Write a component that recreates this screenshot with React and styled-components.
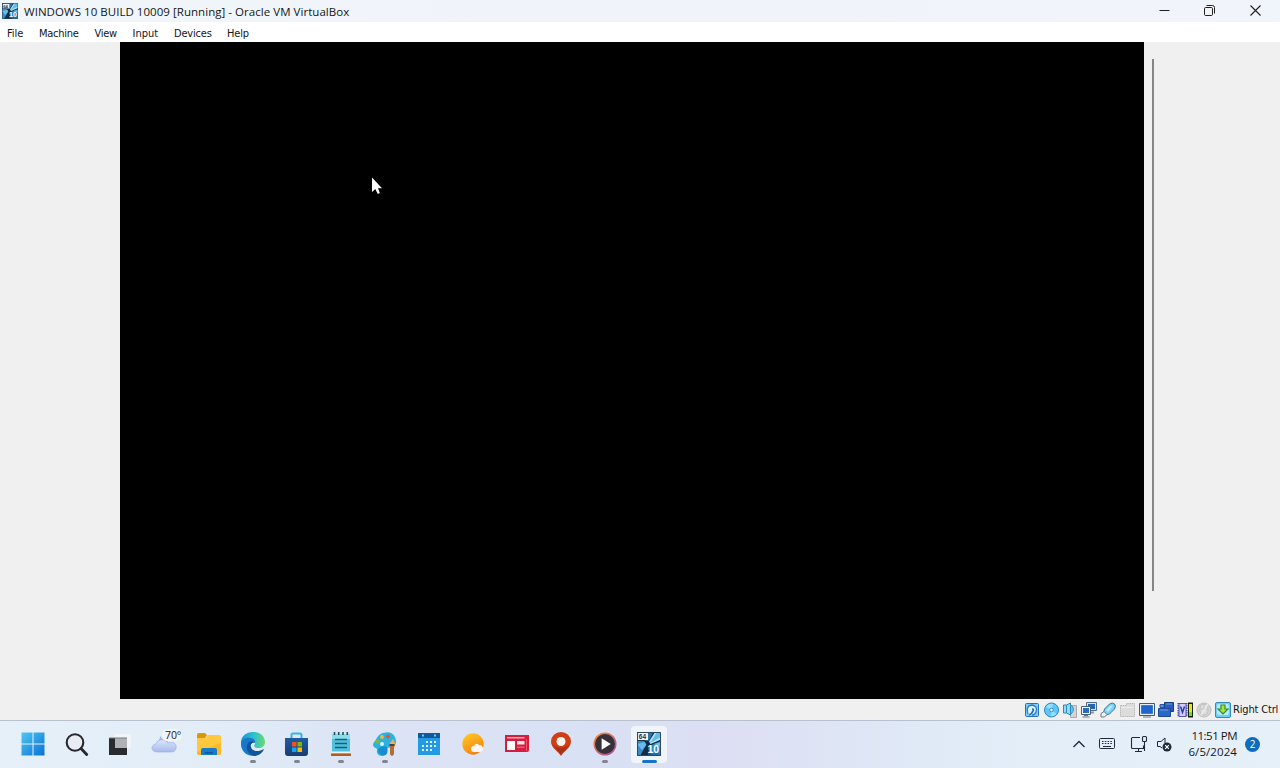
import React from 'react'
import styled, { createGlobalStyle } from 'styled-components'

const GlobalStyle = createGlobalStyle`
  * { box-sizing: border-box; }
  html, body {
    margin: 0;
    padding: 0;
    overflow: hidden;
  }
  svg { display: block; flex: none; }
`

const Screen = styled.div`
  display: flex;
  flex-direction: column;
  width: 1280px;
  height: 768px;
  background: #f0f0f0;
  color: #151515;
  font-family: 'Open Sans', 'Noto Sans', sans-serif;
  cursor: default;
`

const TitleBar = styled.header`
  display: flex;
  align-items: center;
  height: 22px;
  padding-left: 2px;
  background: linear-gradient(90deg, #f0f6fa, #f0f3fa 60%, #f0f5fb);
`

const Title = styled.div`
  flex: 1;
  margin-left: 6px;
  padding-top: 2px;
  font-size: 11.5px;
  line-height: 20px;
  letter-spacing: ${props => props.$spacing}px;
  white-space: nowrap;
`

const WindowButtons = styled.div`
  display: flex;
  align-items: center;
  padding: 0 2px 2px 0;
`

const WindowButton = styled.div`
  display: flex;
  justify-content: center;
  width: 45.5px;
`

const MenuBar = styled.nav`
  display: flex;
  height: 20px;
  padding-left: 7px;
  background: #fff;
`

const MenuItem = styled.div`
  width: ${props => props.$width}px;
  font-family: 'DejaVu Sans Condensed', 'DejaVu Sans', sans-serif;
  font-stretch: condensed;
  font-size: 11px;
  line-height: 23px;
  letter-spacing: ${props => props.$spacing}px;
  white-space: nowrap;
`

const Viewport = styled.main`
  display: flex;
  height: 657px;
  padding-left: 120px;
`

const GuestScreen = styled.div`
  position: relative;
  width: 1024px;
  background: #000;
`

const Pointer = styled.svg`
  position: absolute;
  left: 251px;
  top: 134px;
`

const ScrollThumb = styled.div`
  width: 2px;
  height: 532px;
  margin: 17px 0 0 8px;
  background: #858585;
`

const StatusBar = styled.div`
  display: flex;
  align-items: center;
  justify-content: flex-end;
  gap: 3.1px;
  height: 21px;
  padding-right: 1px;
`

const HostKey = styled.div`
  width: 46px;
  margin-left: -1px;
  padding-top: 1px;
  font-family: 'DejaVu Sans Condensed', 'DejaVu Sans', sans-serif;
  font-stretch: condensed;
  font-size: 11px;
  line-height: 20px;
  letter-spacing: -0.17px;
  white-space: nowrap;
`

const Taskbar = styled.footer`
  display: flex;
  justify-content: space-between;
  height: 48px;
  padding: 0 20px 0 11px;
  border-top: 1px solid #b9c1ce;
  background: linear-gradient(90deg, #e5f0f9 0%, #e3edf8 16%, #dce4f5 28%, #d9e1f4 45%, #dddff3 57%, #dee5f5 65%, #e2edf8 78%, #e6f0f8 100%);
`

const Apps = styled.div`
  display: flex;
`

const AppButton = styled.div`
  display: flex;
  flex-direction: column;
  align-items: center;
  width: 44px;
  padding-top: 5px;
`

const AppTile = styled.div`
  display: flex;
  align-items: center;
  justify-content: center;
  width: 36px;
  height: 37px;
  padding-bottom: 1px;
  border-radius: 4px;
  background: ${props => props.$active ? '#f0f4fb' : 'transparent'};
`

const Indicator = styled.div`
  width: ${props => props.$active ? 15 : 6}px;
  height: 3px;
  margin-top: -3px;
  border-radius: 2px;
  background: ${props => props.$active ? '#1673cc' : '#80858f'};
`

const Tray = styled.div`
  display: flex;
  align-items: center;
  padding-bottom: 1px;
`

const Clock = styled.div`
  width: 54px;
  margin: -1px 8px 0 9px;
  font-size: 11.5px;
  line-height: 15.5px;
  text-align: right;
  white-space: nowrap;
`

const ClockLine = styled.div`
  letter-spacing: ${props => props.$spacing}px;
`

const Badge = styled.div`
  width: 15px;
  height: 15px;
  border-radius: 50%;
  background: #0f6cbd;
  color: #fff;
  font-size: 10px;
  line-height: 15px;
  text-align: center;
`

const GuestLogo = ({ size }) => (
  <svg width={size} height={size} viewBox="0 0 24 24">
    <rect width="24" height="24" fill="#142b40" />
    <path d="M11 0h5.500L11.500 9 8 8.500z" fill="#2c77ae" />
    <path d="M18 0h6v7.500L13.500 12 12 9.500z" fill="#b4e4f8" />
    <path d="M20 0h4v5l-11 6z" fill="#64bceb" />
    <path d="M0 9h7l2.500 3.500L3 24H0z" fill="#3b8bc8" />
    <path d="M0 12l8-2 1 3-4 5z" fill="#65bced" />
    <path d="M13 13.500L24 9v15h-9l-4-7z" fill="#2f86c2" />
    <path d="M17 12l7-2v5z" fill="#6bc1ec" />
    <path d="M1 1h10v7H1z" fill="#e9f4fa" />
    <text x="1.800" y="7" fontSize="6.500" fontWeight="700" fontFamily="Liberation Sans, sans-serif" fill="#1b3040">64</text>
    <text x="10.500" y="20.500" fontSize="10.500" fontWeight="700" fontFamily="Liberation Sans, sans-serif" fill="#fff">10</text>
    <path d="M11 22h11" stroke="#1765ae" strokeWidth="1.500" />
    <path d="M.5.5h23v23H.5z" fill="none" stroke="#294962" />
  </svg>
)

const StartIcon = () => (
  <svg width="24" height="24" viewBox="0 0 24 24">
    <defs>
      <linearGradient id="start" x1="0" y1="0" x2="24" y2="24" gradientUnits="userSpaceOnUse">
        <stop stopColor="#50c8f5" />
        <stop offset="1" stopColor="#0870d2" />
      </linearGradient>
    </defs>
    <path d="M0.500 .5h11v11h-11zM12.500 .5h11v11h-11zM.500 12.500h11v11h-11zM12.500 12.500h11v11h-11z" fill="url(#start)" />
  </svg>
)

const SearchIcon = () => (
  <svg width="24" height="24" viewBox="0 0 24 24" fill="none">
    <circle cx="10" cy="10.500" r="8.300" fill="#e8edf3" stroke="#25282d" strokeWidth="2.100" />
    <path d="M16 16.500l5.700 6" stroke="#25282d" strokeWidth="2.800" strokeLinecap="round" />
  </svg>
)

const TaskViewIcon = () => (
  <svg width="24" height="24" viewBox="0 0 24 24">
    <path d="M6 2h14a2 2 0 012 2v12H6z" fill="#f3f4f6" />
    <path d="M0 6h18v17H0z" fill="#292b2e" />
    <path d="M6 6h12v10H6z" fill="#aeb2b5" />
    <path d="M0 6h18" stroke="#777b80" />
  </svg>
)

const WeatherIcon = () => (
  <svg width="34" height="30" viewBox="0 0 34 30">
    <defs>
      <linearGradient id="cloud" x1="0" y1="8" x2="0" y2="23" gradientUnits="userSpaceOnUse">
        <stop stopColor="#e8f0ff" />
        <stop offset="1" stopColor="#a6baea" />
      </linearGradient>
    </defs>
    <path d="M12 7c2 3 5 5 8 5-1 4-8 5-11 1 2-1 3-3 3-6z" fill="#9fb4ed" />
    <path d="M9 23c-6 0-7-7-1-8 1-5 9-6 12-1 5-2 9 1 8 5 0 3-3 4-5 4z" fill="url(#cloud)" stroke="#9cb1e4" strokeWidth=".7" />
    <rect x="14" y="0" width="20" height="12" rx="5" fill="#f0f4fb" />
    <text x="17" y="10" fontSize="10.500" letterSpacing="-.1" fontFamily="Open Sans, sans-serif" fill="#18202b">70°</text>
  </svg>
)

const FolderIcon = () => (
  <svg width="26" height="24" viewBox="0 0 26 24">
    <path d="M1 3q0-2 2-2h6l2 2-2 3H1z" fill="#d99611" />
    <path d="M1 6h8l3-3h11q2 0 2 2v16q0 2-2 2H3q-2 0-2-2z" fill="#ffc83d" />
    <path d="M1 20l24-9v10q0 2-2 2H3q-2 0-2-2z" fill="#fbb829" />
    <path d="M5 23v-5q0-2 2-2h12q2 0 2 2v5z" fill="#177bc9" />
    <path d="M9 20h8v1.500H9z" fill="#0c579d" />
  </svg>
)

const EdgeIcon = () => (
  <svg width="26" height="26" viewBox="0 0 26 26">
    <defs>
      <linearGradient id="edge" x1="1" y1="7" x2="25" y2="9" gradientUnits="userSpaceOnUse">
        <stop stopColor="#1895d8" />
        <stop offset=".55" stopColor="#2fc2cd" />
        <stop offset="1" stopColor="#6bda6d" />
      </linearGradient>
    </defs>
    <path d="M1 12C1 5 6 1 13 1c8 0 12 5 12 10 0 4-3 6-6 6-4 0-6-1-4-4 1-3-2-5-5-5-4 0-8 2-9 5z" fill="url(#edge)" />
    <path d="M1 13c0-5 5-7 9-6 4 0 6 3 5 5-3-1-6 2-5 6 1 3 4 5 7 6-9 3-16-3-16-11z" fill="#1678c7" />
    <path d="M9 11c-5 5-1 13 6 14 5-1 8-4 9-7-5 3-12 3-13-2-1-3 1-4 3-5-1-1-3-1-5 0z" fill="#13539c" />
  </svg>
)

const StoreIcon = () => (
  <svg width="24" height="25" viewBox="0 0 24 25">
    <defs>
      <linearGradient id="store" x1="0" y1="5" x2="0" y2="25" gradientUnits="userSpaceOnUse">
        <stop stopColor="#205da8" />
        <stop offset="1" stopColor="#163b70" />
      </linearGradient>
    </defs>
    <path d="M6.500 7V3q0-1.500 1.500-1.500h7q1.500 0 1.500 1.500v4" fill="none" stroke="#35b5e5" strokeWidth="2" />
    <path d="M0 6h23v15q0 3-3 3H3q-3 0-3-3z" fill="url(#store)" />
    <path d="M7 10h4.500v4.500H7z" fill="#f25022" />
    <path d="M12.500 10H17v4.500h-4.500z" fill="#7fba00" />
    <path d="M7 15.500h4.500V20H7z" fill="#13a5ef" />
    <path d="M12.500 15.500H17V20h-4.500z" fill="#ffb900" />
  </svg>
)

const NotepadIcon = () => (
  <svg width="22" height="26" viewBox="0 0 22 26">
    <path d="M2 3h18v20H2z" fill="#52bfdb" />
    <path d="M2 3h18v5H2z" fill="#8bdcea" />
    <path d="M5 8.500h12M5 12.500h12M5 16.500h12" stroke="#0d6583" strokeWidth="1.500" />
    <path d="M4.500 1v3M8.700 1v3M13 1v3M17.300 1v3" stroke="#234b5d" strokeWidth="1.600" />
    <path d="M2 20.500h18v2H2z" fill="#e6f6f9" />
    <path d="M1 22.500h20v2.500H1z" fill="#b65b20" />
  </svg>
)

const PaintIcon = () => (
  <svg width="26" height="26" viewBox="0 0 26 26">
    <path d="M14 1.500c6-1 10 4 10 9 0 5-4 7-7 6-3 0 0 5-3 7-4 3-10 1-9-4 1-3-4-2-4-6 0-2 2-3 3-5 2-4 5-7 10-7z" fill="#2cb2e2" />
    <path d="M6 18q4-4 9-2c0 3 1 5-1 7.500-3 2-8 1-8-5.500z" fill="#168dcd" />
    <circle cx="5.500" cy="10.500" r="2" fill="#75bc42" />
    <circle cx="10" cy="6" r="1.900" fill="#f2b83b" />
    <circle cx="16" cy="5.500" r="1.900" fill="#e3562e" />
    <circle cx="10" cy="13" r="2" fill="#d9eff8" />
    <path d="M18 12l3-4 2 4v4h-5z" fill="#efb05b" />
    <path d="M18 15h4v8q-2 4-4 0z" fill="#b46d37" />
    <path d="M17.500 13h5v2h-5z" fill="#39445a" />
  </svg>
)

const CalendarIcon = () => (
  <svg width="24" height="24" viewBox="0 0 24 24">
    <path d="M1 1h22v22H1z" fill="#229ae4" />
    <path d="M1 1h22v5H1z" fill="#12589f" />
    <path d="M5 2.500h2v2H5zM17 2.500h2v2h-2z" fill="#78caf2" />
    {[[9, 9], [13, 9], [17, 9], [5, 13], [9, 13], [13, 13], [17, 13], [5, 17], [9, 17], [13, 17]].map(([x, y]) => (
      <rect key={`${x}-${y}`} x={x} y={y} width="2" height="2" fill="#e9faff" />
    ))}
  </svg>
)

const SunIcon = () => (
  <svg width="24" height="24" viewBox="0 0 24 24">
    <defs>
      <linearGradient id="sun" x1="4" y1="2" x2="15" y2="24" gradientUnits="userSpaceOnUse">
        <stop stopColor="#ffc91f" />
        <stop offset="1" stopColor="#f27a14" />
      </linearGradient>
    </defs>
    <circle cx="12" cy="12" r="10.700" fill="url(#sun)" />
    <path d="M13 20q-3 0-3-3t3-3q2-4 5-1 4 0 4 4 0 3-3 3z" fill="#f8f5f4" />
  </svg>
)

const NewsIcon = () => (
  <svg width="26" height="20" viewBox="0 0 26 20">
    <path d="M1 1h24v15q0 2-2 2H1z" fill="#d51e3d" />
    <path d="M3 3h17.500v1.500H3z" fill="#f3a7b5" />
    <path d="M3 7h8v9H3z" fill="#fff" />
    <path d="M13 7h7.500v3.500H13z" fill="#f8e3e7" />
    <path d="M13 12.500h7.500v1.500H13z" fill="#e95c75" />
    <path d="M22.500 5v12" stroke="#f0526b" />
  </svg>
)

const MapPinIcon = () => (
  <svg width="22" height="26" viewBox="0 0 22 26">
    <path d="M11 25C8 20 1 17 1 10.500a10 9.500 0 0120 0C21 17 14 20 11 25z" fill="#cf3f13" />
    <path d="M2.500 13c2 5 6.500 7 8.500 11 2-4 6.500-6 8.500-11-3 5-14 5-17 0z" fill="#a93018" />
    <circle cx="11" cy="10.500" r="4.500" fill="#f8f4f2" />
  </svg>
)

const MediaIcon = () => (
  <svg width="24" height="24" viewBox="0 0 25 25">
    <defs>
      <linearGradient id="media" x1="3" y1="2" x2="20" y2="24" gradientUnits="userSpaceOnUse">
        <stop stopColor="#f58636" />
        <stop offset="1" stopColor="#ad529c" />
      </linearGradient>
    </defs>
    <circle cx="12.500" cy="12.500" r="11.200" fill="#343238" stroke="url(#media)" strokeWidth="1.600" />
    <path d="M9 6.500v12l9.500-6z" fill="#fff" />
  </svg>
)

const apps = [
  { Icon: StartIcon },
  { Icon: SearchIcon },
  { Icon: TaskViewIcon },
  { Icon: WeatherIcon },
  { Icon: FolderIcon },
  { Icon: EdgeIcon, running: true },
  { Icon: StoreIcon, running: true },
  { Icon: NotepadIcon, running: true },
  { Icon: PaintIcon, running: true },
  { Icon: CalendarIcon },
  { Icon: SunIcon },
  { Icon: NewsIcon },
  { Icon: MapPinIcon },
  { Icon: MediaIcon, running: true },
  { Icon: () => <GuestLogo size={24} />, running: true, active: true },
]

const menus = [
  { label: 'File', width: 32, spacing: -.05 },
  { label: 'Machine', width: 55.5, spacing: -.25 },
  { label: 'View', width: 38, spacing: -.3 },
  { label: 'Input', width: 41.5, spacing: 0 },
  { label: 'Devices', width: 53, spacing: -.2 },
  { label: 'Help', width: 30, spacing: -.2 },
]

// VM device indicators, left to right
const devices = [
  <g key="disk">
    <rect x="1.500" y="1.500" width="13" height="13" rx="1" fill="#80cdf3" stroke="#2372b5" />
    <path d="M4 12q-3-8 4-9 6 1 4 7-1 3-4 3" fill="#d7f3ff" stroke="#267dbf" strokeWidth="1.300" />
    <path d="M8 7q2 0 1 2-1 3-4 4" fill="none" stroke="#2867aa" strokeWidth="1.700" />
  </g>,
  <g key="optical">
    <circle cx="8.500" cy="8" r="7" fill="#5fc7f5" stroke="#2c86c9" />
    <path d="M8.500 8L3 5q3-4 7-3zM8.500 8l5 4q-3 3-6 2z" fill="#93dfff" />
    <circle cx="8.500" cy="8" r="1.800" fill="#e8faff" stroke="#338ccb" />
  </g>,
  <g key="audio">
    <path d="M8.500 3.500h6v12h-6z" fill="#d1d3d4" stroke="#aaa" />
    <path d="M1.500 3h3L8.500 1v12l-4-2h-3z" fill="#8bdcf8" stroke="#278abd" />
    <path d="M4.500 3v8" stroke="#3587bc" />
    <path d="M9 3q5 4 0 9" fill="#6dbfe5" stroke="#4290b6" />
  </g>,
  <g key="network">
    <path d="M5.500 .5h10v8h-10z" fill="#d7e4ef" stroke="#536c89" />
    <path d="M7 2h7v5H7z" fill="#2464b6" />
    <path d="M8 9.500h5v2H8z" fill="#8998a6" />
    <path d="M.5 4.500h9v8h-9z" fill="#f1f6fb" stroke="#48627e" />
    <path d="M2 6h6v5H2z" fill="#286dc1" />
    <path d="M3 13.500h4M1.500 15h7" stroke="#667788" />
  </g>,
  <g key="usb">
    <path d="M3.500 11l1-4 5-5q3-2 5 0t0 5l-5 5-4 1z" fill="#7bd0f3" stroke="#3878ab" />
    <path d="M6 8l4-4q2-1 3 0L8 10z" fill="#b5ebff" />
    <path d="M1 11.500l3-2 3 3L4.500 15H1z" fill="#edf1f3" stroke="#667883" />
  </g>,
  <g key="shared">
    <path d="M1.500 3.500h6v-2h8v13h-14z" fill="#dcdcdc" stroke="#b8b8b8" strokeDasharray="1.500 .7" />
    <path d="M2 5.500h13" stroke="#ececec" />
  </g>,
  <g key="display">
    <path d="M.5 1.500h15v12H.5z" fill="#e5edf5" stroke="#3b5978" />
    <path d="M2.500 3.500h11v8h-11z" fill="#1f65cd" stroke="#337bd5" />
    <path d="M4 15h8" stroke="#677b90" />
  </g>,
  <g key="recording">
    <path d="M6.500 .5h9v9h-9z" fill="#285bbd" stroke="#193c83" />
    <path d="M2 2.500h4v3H2z" fill="#5296dd" stroke="#2655a1" />
    <path d="M.5 6.500h12v8H.5z" fill="#2868c9" stroke="#1f4b97" />
    <path d="M2 8h8M8 2h6" stroke="#67a0e7" />
  </g>,
  <g key="cpu">
    <path d="M1.500 1v14M9.500 1v14" stroke="#3940a6" strokeWidth="2" strokeDasharray="1.300 1" />
    <path d="M2 1.500h7v13H2z" fill="#d0cef7" stroke="#5355b4" />
    <path d="M3.500 4.500l2 6 2-6" fill="none" stroke="#3035a0" strokeWidth="1.500" />
    <path d="M11 .5h5v15h-5z" fill="#18220b" />
    <path d="M12 2h3v12h-3z" fill="#e5e629" />
    <path d="M12 10h3v4h-3z" fill="#7bd631" />
  </g>,
  <g key="mouse">
    <circle cx="8" cy="8" r="7" fill="#d6d6d6" stroke="#bdbdbd" />
    <path d="M4 6q0-4 4-4t4 4v3q0 4-4 4t-4-4zM8 2v5M4 7h8" fill="#dedede" stroke="#c3c3c3" />
    <path d="M12 2L5 13" stroke="#ececec" strokeWidth="1.500" />
  </g>,
  <g key="keyboard">
    <rect x=".5" y=".5" width="15" height="15" rx="1.500" fill="#70cef5" stroke="#2f8abd" />
    <rect x="2" y="2" width="12" height="11" rx="2" fill="#b5e9fb" />
    <path d="M6 3h4v4h3l-5 5-5-5h3z" fill="#a7e43f" stroke="#318f2c" strokeWidth="1.200" />
  </g>,
]

const App = () => {
  return (
    <Screen>
      <GlobalStyle />
      <TitleBar>
        <GuestLogo size={16} />
        <Title $spacing={.04}>WINDOWS 10 BUILD 10009 [Running] - Oracle VM VirtualBox</Title>
        <WindowButtons>
          <WindowButton>
            <svg width="11" height="11" viewBox="0 0 11 11"><path d="M.5 5.500h10" stroke="#202020" /></svg>
          </WindowButton>
          <WindowButton>
            <svg width="11" height="11" viewBox="0 0 11 11" fill="none" stroke="#202020">
              <rect x=".5" y="2.500" width="8" height="8" rx="1.200" />
              <path d="M2.500 .5h6q2 0 2 2v6" />
            </svg>
          </WindowButton>
          <WindowButton>
            <svg width="11" height="11" viewBox="0 0 11 11"><path d="M.5 .5l10 10M10.500 .5l-10 10" stroke="#202020" strokeWidth="1.100" /></svg>
          </WindowButton>
        </WindowButtons>
      </TitleBar>
      <MenuBar>
        {menus.map(menu => (
          <MenuItem key={menu.label} $width={menu.width} $spacing={menu.spacing}>{menu.label}</MenuItem>
        ))}
      </MenuBar>
      <Viewport>
        <GuestScreen>
          <Pointer width="12" height="19" viewBox="0 0 12 19">
            <path d="M1 1.500v14.500l3.300-3L6.800 18l2-1L7 12.300h4z" fill="#fff" />
          </Pointer>
        </GuestScreen>
        <ScrollThumb />
      </Viewport>
      <StatusBar>
        {devices.map(device => (
          <svg key={device.key} width="16" height="16" viewBox="0 0 16 16">{device}</svg>
        ))}
        <HostKey>Right Ctrl</HostKey>
      </StatusBar>
      <Taskbar>
        <Apps>
          {apps.map(({ Icon, running, active }, i) => (
            <AppButton key={i}>
              <AppTile $active={active}><Icon /></AppTile>
              {running && <Indicator $active={active} />}
            </AppButton>
          ))}
        </Apps>
        <Tray>
          <svg width="28" height="18" viewBox="0 0 28 18" fill="none">
            <path d="M8.500 12L14 6.500l5.500 5.500" stroke="#202938" strokeWidth="1.300" />
          </svg>
          <svg width="28" height="18" viewBox="0 0 28 18" fill="none" stroke="#202938">
            <rect x="6.500" y="3.500" width="15" height="10" rx="1" />
            <path d="M9 6.500h10M9 8.500h10" strokeDasharray="1.500 1.300" />
            <path d="M10 11.500h8" />
          </svg>
          <svg width="34" height="18" viewBox="0 0 34 18" fill="none" stroke="#202938" strokeWidth="1.100">
            <path d="M19 2.500h-7.500q-1 0-1 1v9q0 1 1 1h11v-3M14 16.500h7M17.500 13.500v3" />
            <rect x="21.500" y="1.500" width="4" height="5" rx="1" />
            <path d="M23.500 6.500V16" />
          </svg>
          <svg width="19" height="18" viewBox="0 0 19 18" fill="none" stroke="#202938">
            <path d="M10 8V3L6 6.500H2.500v5H5l2 1.500" />
            <circle cx="12" cy="12" r="4.500" fill="#202938" stroke="none" />
            <path d="M10.200 10.200l3.600 3.600M13.800 10.200l-3.600 3.600" stroke="#fff" strokeWidth="1.200" />
          </svg>
          <Clock>
            <ClockLine $spacing={-.5}>11:51 PM</ClockLine>
            <ClockLine $spacing={.08}>6/5/2024</ClockLine>
          </Clock>
          <Badge>2</Badge>
        </Tray>
      </Taskbar>
    </Screen>
  )
}

export default App
